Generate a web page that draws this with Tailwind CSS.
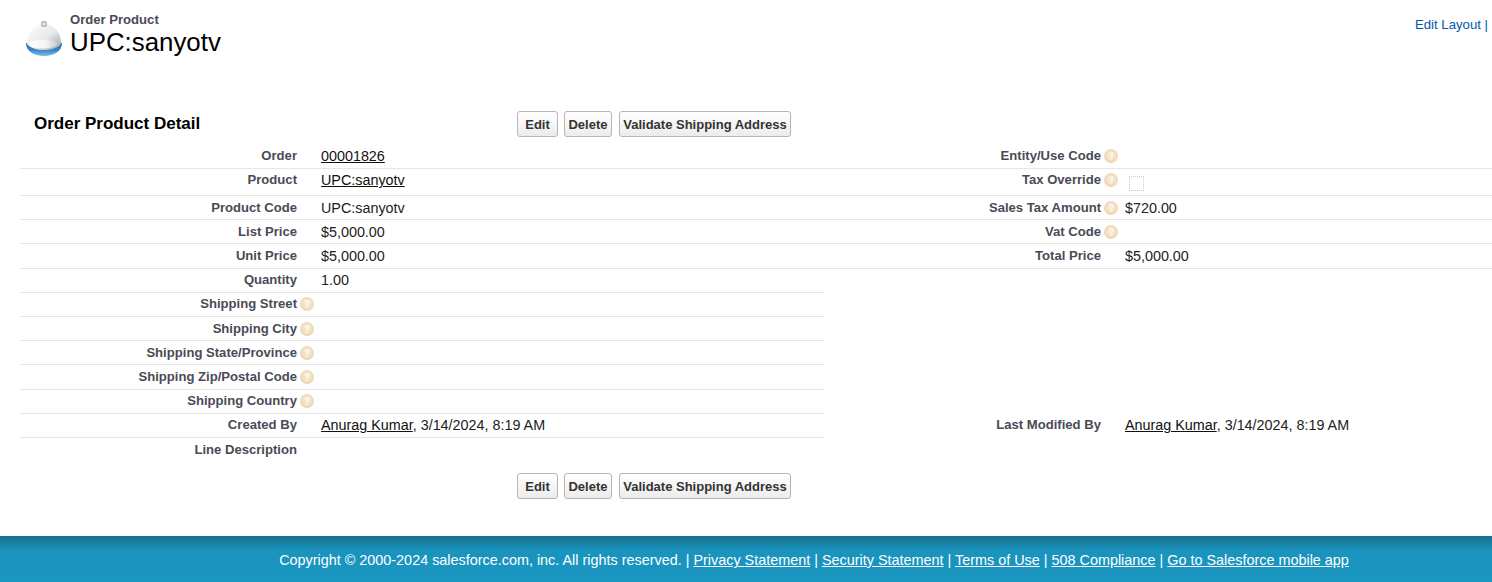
<!DOCTYPE html>
<html><head><meta charset="utf-8"><script src="https://cdn.jsdelivr.net/npm/@tailwindcss/browser@4"></script></head>
<body class="bg-white font-['Liberation_Sans',Arial,sans-serif] text-[14.35px] text-[#222] w-[1492px] h-[582px] overflow-hidden flex flex-col">
<svg width="0" height="0" class="absolute"><defs>
<radialGradient id="h" cx="50%" cy="45%" r="60%"><stop offset="0" stop-color="#f8eedc"/><stop offset="1" stop-color="#ecd3ac"/></radialGradient>
<symbol id="help" viewBox="0 0 14 14"><circle cx="7" cy="7" r="7" fill="url(#h)"/><text x="7" y="11" font-size="10" font-weight="700" text-anchor="middle" fill="#fdf8ee" font-family="Liberation Sans">?</text></symbol>
<linearGradient id="dome" x1="0" y1="0" x2="1" y2="1"><stop offset="0" stop-color="#ffffff"/><stop offset=".55" stop-color="#e6e8ea"/><stop offset="1" stop-color="#9aa1a7"/></linearGradient>
<linearGradient id="inner" x1="0" y1="0" x2="1" y2="0"><stop offset="0" stop-color="#ffffff"/><stop offset=".6" stop-color="#f2f3f4"/><stop offset="1" stop-color="#c9cdd1"/></linearGradient>
<linearGradient id="base" x1="0" y1="0" x2="0" y2="1"><stop offset="0" stop-color="#1f5fa8"/><stop offset=".55" stop-color="#3b86cc"/><stop offset="1" stop-color="#7dbde8"/></linearGradient>
</defs></svg>
<header class="h-[111px] shrink-0 flex justify-between">
  <div class="flex pl-[25px] pt-[12px]">
    <svg width="38" height="38" viewBox="0 0 38 38" class="mt-[7px]">
      <path d="M1 24c0 8 8 13 18 13s18-5 18-13z" fill="url(#base)"/>
      <path d="M2 25C2 13 9 5 19 5s17 8 17 20c-3 4-10 6-17 6S5 29 2 25z" fill="url(#dome)"/>
      <ellipse cx="18" cy="25" rx="14" ry="4.500" fill="url(#inner)"/>
      <rect x="16" y="2" width="6" height="6" rx="2" fill="#b9bdc2"/>
      <rect x="17.500" y="4" width="3" height="2" fill="#eef0f1"/>
    </svg>
    <div class="ml-[7px]">
      <div class="text-[13.1px] font-bold text-[#4a4a56] leading-[16px]">Order Product</div>
      <h1 class="text-[25.85px] leading-[28px] text-black">UPC:sanyotv</h1>
    </div>
  </div>
  <a class="text-[13.2px] text-[#015ba7] pt-[15px] pr-[4px] h-fit">Edit Layout |</a>
</header>
<main class="pl-[20px] flex-1">
  <div class="h-[33px] flex relative">
    <h2 class="pl-[14px] pt-[3px] w-[497px] text-[17px] leading-[20px] font-bold text-black">Order Product Detail</h2>
    <div class="flex gap-[6px] h-[26px]">
      <button class="h-[26px] w-[41px] border border-[#b5b5b5] rounded-[3px] bg-gradient-to-b from-white to-[#ececec] text-[13px] leading-[26px] font-bold text-[#333]">Edit</button>
      <button class="h-[26px] w-[48px] border border-[#b5b5b5] rounded-[3px] bg-gradient-to-b from-white to-[#ececec] text-[13px] leading-[26px] font-bold text-[#333]">Delete</button>
      <button class="h-[26px] w-[172px] ml-[1px] border border-[#b5b5b5] rounded-[3px] bg-gradient-to-b from-white to-[#ececec] text-[13px] leading-[26px] font-bold text-[#333]">Validate Shipping Address</button>
    </div>
  </div>
  <div class="flex">
    <div class="w-[804px] shrink-0">
      <div class="h-[25px] border-b border-[#e6e6e6] flex"><span class="w-[277px] text-right text-[13.1px] font-bold text-[#4a4a56] pt-[2px]">Order</span><span class="pl-[24px] pt-[2px]"><a class="underline text-[#111]">00001826</a></span></div>
      <div class="h-[27px] border-b border-[#e6e6e6] flex"><span class="w-[277px] text-right text-[13.1px] font-bold text-[#4a4a56] pt-[1px]">Product</span><span class="pl-[24px] pt-[1px]"><a class="underline text-[#111]">UPC:sanyotv</a></span></div>
      <div class="h-[24px] border-b border-[#e6e6e6] flex"><span class="w-[277px] text-right text-[13.1px] font-bold text-[#4a4a56] pt-[2px]">Product Code</span><span class="pl-[24px] pt-[2px]">UPC:sanyotv</span></div>
      <div class="h-[24px] border-b border-[#e6e6e6] flex"><span class="w-[277px] text-right text-[13.1px] font-bold text-[#4a4a56] pt-[2px]">List Price</span><span class="pl-[24px] pt-[2px]">$5,000.00</span></div>
      <div class="h-[25px] border-b border-[#e6e6e6] flex"><span class="w-[277px] text-right text-[13.1px] font-bold text-[#4a4a56] pt-[2px]">Unit Price</span><span class="pl-[24px] pt-[2px]">$5,000.00</span></div>
      <div class="h-[24px] border-b border-[#e6e6e6] flex"><span class="w-[277px] text-right text-[13.1px] font-bold text-[#4a4a56] pt-[1px]">Quantity</span><span class="pl-[24px] pt-[1px]">1.00</span></div>
      <div class="h-[24px] border-b border-[#e6e6e6] flex relative"><span class="w-[277px] text-right text-[13.1px] font-bold text-[#4a4a56] pt-[1px]">Shipping Street</span><svg class="w-[14px] h-[14px] ml-[3px] mt-[4px]"><use href="#help"/></svg></div>
      <div class="h-[24px] border-b border-[#e6e6e6] flex relative"><span class="w-[277px] text-right text-[13.1px] font-bold text-[#4a4a56] pt-[2px]">Shipping City</span><svg class="w-[14px] h-[14px] ml-[3px] mt-[5px]"><use href="#help"/></svg></div>
      <div class="h-[24px] border-b border-[#e6e6e6] flex relative"><span class="w-[277px] text-right text-[13.1px] font-bold text-[#4a4a56] pt-[2px]">Shipping State/Province</span><svg class="w-[14px] h-[14px] ml-[3px] mt-[5px]"><use href="#help"/></svg></div>
      <div class="h-[25px] border-b border-[#e6e6e6] flex relative"><span class="w-[277px] text-right text-[13.1px] font-bold text-[#4a4a56] pt-[2px]">Shipping Zip/Postal Code</span><svg class="w-[14px] h-[14px] ml-[3px] mt-[5px]"><use href="#help"/></svg></div>
      <div class="h-[24px] border-b border-[#e6e6e6] flex relative"><span class="w-[277px] text-right text-[13.1px] font-bold text-[#4a4a56] pt-[1px]">Shipping Country</span><svg class="w-[14px] h-[14px] ml-[3px] mt-[4px]"><use href="#help"/></svg></div>
      <div class="h-[24px] border-b border-[#e6e6e6] flex"><span class="w-[277px] text-right text-[13.1px] font-bold text-[#4a4a56] pt-[1px]">Created By</span><span class="pl-[24px] pt-[1px]"><a class="underline text-[#111]">Anurag Kumar</a>, 3/14/2024, 8:19 AM</span></div>
      <div class="h-[24px] flex"><span class="w-[277px] text-right text-[13.1px] font-bold text-[#4a4a56] pt-[2px]">Line Description</span></div>
    </div>
    <div class="flex-1 flex flex-col">
      <div class="h-[25px] border-b border-[#e6e6e6] flex"><span class="w-[277px] text-right text-[13.1px] font-bold text-[#4a4a56] pt-[2px]">Entity/Use Code</span><svg class="w-[14px] h-[14px] ml-[3px] mt-[5px]"><use href="#help"/></svg></div>
      <div class="h-[27px] border-b border-[#e6e6e6] flex"><span class="w-[277px] text-right text-[13.1px] font-bold text-[#4a4a56] pt-[1px]">Tax Override</span><svg class="w-[14px] h-[14px] ml-[3px] mt-[4px] shrink-0"><use href="#help"/></svg><span class="ml-[11px] mt-[7px] w-[15px] h-[15px] border border-dotted border-[#ccc]"></span></div>
      <div class="h-[24px] border-b border-[#e6e6e6] flex"><span class="w-[277px] text-right text-[13.1px] font-bold text-[#4a4a56] pt-[2px]">Sales Tax Amount</span><svg class="w-[14px] h-[14px] ml-[3px] mt-[5px] shrink-0"><use href="#help"/></svg><span class="ml-[7px] pt-[2px]">$720.00</span></div>
      <div class="h-[24px] border-b border-[#e6e6e6] flex"><span class="w-[277px] text-right text-[13.1px] font-bold text-[#4a4a56] pt-[2px]">Vat Code</span><svg class="w-[14px] h-[14px] ml-[3px] mt-[5px]"><use href="#help"/></svg></div>
      <div class="h-[25px] border-b border-[#e6e6e6] flex"><span class="w-[277px] text-right text-[13.1px] font-bold text-[#4a4a56] pt-[2px]">Total Price</span><span class="ml-[24px] pt-[2px]">$5,000.00</span></div>
      <div class="h-[144px]"></div>
      <div class="h-[24px] flex"><span class="w-[277px] text-right text-[13.1px] font-bold text-[#4a4a56] pt-[2px]">Last Modified By</span><span class="pl-[24px] pt-[2px]"><a class="underline text-[#111]">Anurag Kumar</a>, 3/14/2024, 8:19 AM</span></div>
    </div>
  </div>
  <div class="flex gap-[6px] pl-[497px] pt-[11px]">
    <button class="h-[26px] w-[41px] border border-[#b5b5b5] rounded-[3px] bg-gradient-to-b from-white to-[#ececec] text-[13px] leading-[26px] font-bold text-[#333]">Edit</button>
    <button class="h-[26px] w-[48px] border border-[#b5b5b5] rounded-[3px] bg-gradient-to-b from-white to-[#ececec] text-[13px] leading-[26px] font-bold text-[#333]">Delete</button>
    <button class="h-[26px] w-[172px] ml-[1px] border border-[#b5b5b5] rounded-[3px] bg-gradient-to-b from-white to-[#ececec] text-[13px] leading-[26px] font-bold text-[#333]">Validate Shipping Address</button>
  </div>
</main>
<footer class="h-[46px] shrink-0 bg-[linear-gradient(#15708f_0,#1a93bd_14px,#1a96c0_100%)] text-white text-[14.4px] text-center leading-[48px] pl-[136px]">Copyright © 2000-2024 salesforce.com, inc. All rights reserved. | <a class="underline">Privacy Statement</a> | <a class="underline">Security Statement</a> | <a class="underline">Terms of Use</a> | <a class="underline">508 Compliance</a> | <a class="underline">Go to Salesforce mobile app</a></footer>
</body></html>
